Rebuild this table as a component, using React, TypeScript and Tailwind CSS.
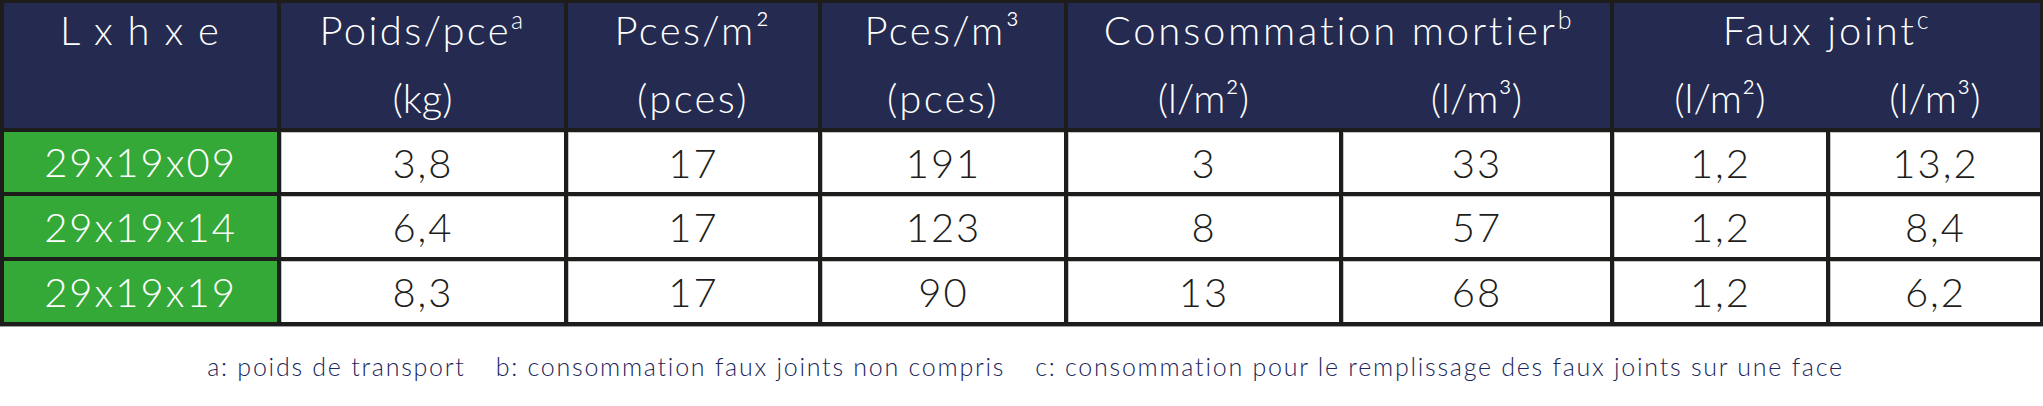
import React from 'react';

const rows = [
  ['29x19x09', '3,8', '17', '191', '3', '33', '1,2', '13,2'],
  ['29x19x14', '6,4', '17', '123', '8', '57', '1,2', '8,4'],
  ['29x19x19', '8,3', '17', '90', '13', '68', '1,2', '6,2'],
];

function Sup({children}: {children: React.ReactNode}) {
  return <span className="relative -top-[16px] text-[25px] leading-none">{children}</span>;
}

function HeadCell({top, bottom}: {top: React.ReactNode; bottom?: React.ReactNode}) {
  return (
    <div className="bg-[#252a50] flex flex-col items-center pt-[1px] gap-[16px]">
      <div className="h-[52px] leading-[52px] whitespace-nowrap">{top}</div>
      <div className="h-[52px] leading-[52px] whitespace-nowrap">{bottom}</div>
    </div>
  );
}

function SpanHead({title, units, cols}: {title: React.ReactNode; units: string[]; cols: string}) {
  return (
    <div className={`col-span-2 bg-[#252a50] grid ${cols} gap-x-[4px] pt-[1px] gap-y-[16px] content-start`}>
      <div className="col-span-2 h-[52px] leading-[52px] text-center whitespace-nowrap">{title}</div>
      {units.map((u) => (
        <div key={u} className="h-[52px] leading-[52px] text-center">
          {u}
        </div>
      ))}
    </div>
  );
}

export default function App() {
  return (
    <div className="w-[2043px] h-[406px] bg-white font-['Lato',sans-serif] font-light">
      <div className="border-b border-[#a0a0a0]">
        <div className="grid grid-cols-[273px_283px_250px_242px_271px_267px_212px_210px] grid-rows-[125px_60px_61px_61px] gap-[4px] bg-[#1d1d1b] pt-[3px] pl-[4px] pr-[3px] pb-[4px] text-[40px] text-white">
          <HeadCell top={<span className="tracking-[0.05em]">L x h x e</span>} />
          <HeadCell top={<span className="tracking-[0.06em]">Poids/pce<Sup>a</Sup></span>} bottom="(kg)" />
          <HeadCell top={<span className="tracking-[0.06em]">Pces/m²</span>} bottom={<span className="tracking-[0.06em]">(pces)</span>} />
          <HeadCell top={<span className="tracking-[0.06em]">Pces/m³</span>} bottom={<span className="tracking-[0.06em]">(pces)</span>} />
          <SpanHead
            title={<span className="tracking-[0.07em]">Consommation mortier<Sup>b</Sup></span>}
            units={['(l/m²)', '(l/m³)']}
            cols="grid-cols-[271px_267px]"
          />
          <SpanHead
            title={<span className="tracking-[0.07em]">Faux joint<Sup>c</Sup></span>}
            units={['(l/m²)', '(l/m³)']}
            cols="grid-cols-[212px_210px]"
          />
          {rows.map((r) =>
            r.map((v, i) =>
              i === 0 ? (
                <div key={r[0] + i} className="bg-[#35a937] flex items-center justify-center tracking-[0.05em]">
                  {v}
                </div>
              ) : (
                <div
                  key={r[0] + i}
                  className="bg-white text-[#1d1d1b] flex items-center justify-center border-t border-l border-[#c4c4c4] tracking-[0.05em]"
                >
                  {v}
                </div>
              ),
            ),
          )}
        </div>
      </div>
      <div className="flex justify-center pt-[21px] pl-[8px] text-[25px] text-[#20255a] gap-x-[30px] tracking-[0.07em]">
        <span>a: poids de transport</span>
        <span>b: consommation faux joints non compris</span>
        <span>c: consommation pour le remplissage des faux joints sur une face</span>
      </div>
    </div>
  );
}
